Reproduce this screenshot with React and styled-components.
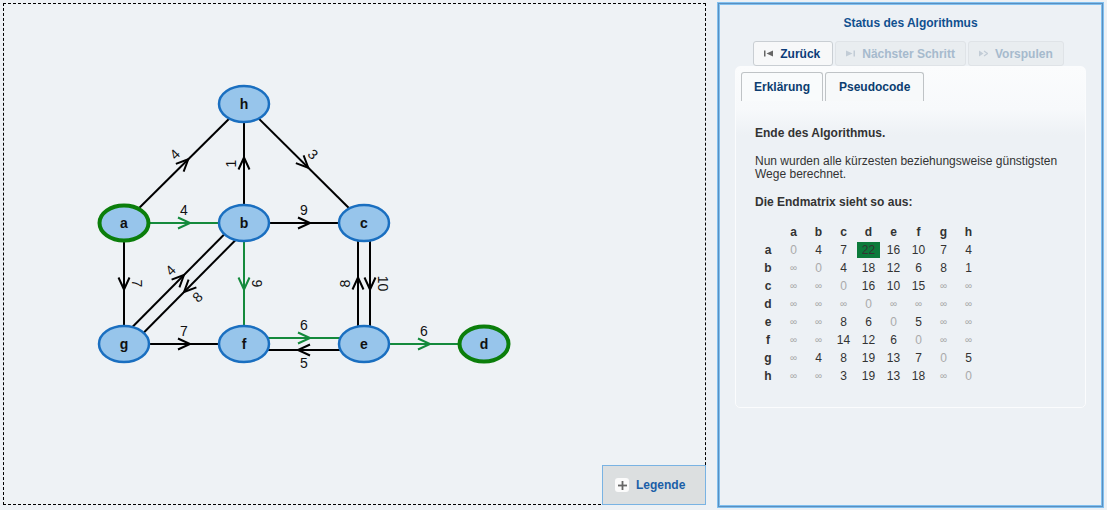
import styled, { createGlobalStyle } from "styled-components";

const GlobalStyle = createGlobalStyle`
  html, body {
    margin: 0;
    padding: 0;
    background: #edf1f5;
    font-family: "Liberation Sans", Arial, sans-serif;
  }
`;

const Page = styled.div`
  display: flex;
  align-items: flex-start;
  gap: 12px;
  padding: 3px;
`;

const Canvas = styled.div`
  position: relative;
  flex-shrink: 0;
  width: 701px;
  height: 500px;
  border: 1px dashed #000;
  background: #eef2f5;
`;

const GraphSvg = styled.svg`
  display: block;
  width: 701px;
  height: 500px;
`;

const LegendButton = styled.button`
  position: absolute;
  right: -1px;
  bottom: -1px;
  width: 104px;
  height: 40px;
  display: flex;
  align-items: center;
  gap: 7px;
  padding: 0 0 0 12px;
  background: #dcdfe0;
  border: 1px solid #79b3e3;
  font: bold 12px "Liberation Sans", Arial, sans-serif;
  color: #1a5ea7;
  cursor: pointer;
`;

const PlusBox = styled.span`
  width: 14px;
  height: 14px;
  border-radius: 3px;
  background: #fbfbfb;
  display: flex;
  align-items: center;
  justify-content: center;
`;

const Panel = styled.div`
  flex-shrink: 0;
  width: 351px;
  height: 502px;
  border: 1px solid #5b8fbf;
  box-shadow: 0 0 0 1px #80c0f0, inset 0 0 0 1px #80c0f0;
  background: #edf1f5;
  padding: 0 16px;
  display: flex;
  flex-direction: column;
  align-items: stretch;
`;

const Title = styled.h2`
  margin: 0;
  padding-top: 12px;
  height: 25px;
  text-align: center;
  font-size: 12px;
  line-height: 14px;
  font-weight: bold;
  color: #10508f;
`;

const Controls = styled.div`
  display: flex;
  justify-content: center;
  gap: 2px;
  margin-left: -4px;
`;

const StepButton = styled.button`
  height: 25px;
  display: flex;
  align-items: center;
  gap: 7px;
  padding: 0 ${(p) => p.$pad}px 0 10px;
  border: 1px solid ${(p) => (p.disabled ? "#dfe3e7" : "#c9ced3")};
  border-radius: 3px;
  background: ${(p) => (p.disabled ? "#e9edf0" : "#f7f8f9")};
  color: ${(p) => (p.disabled ? "#a6bacd" : "#0b3b78")};
  font: bold 12px "Liberation Sans", Arial, sans-serif;
  cursor: ${(p) => (p.disabled ? "default" : "pointer")};
`;

const Content = styled.div`
  border: 1px solid #fbfcfd;
  border-radius: 5px;
  background: linear-gradient(#fbfcfd 0, #f7f9fb 42px, #edf1f5 68px);
  padding: 5px 5px 0 5px;
`;

const Tabs = styled.div`
  display: flex;
  gap: 2px;
`;

const Tab = styled.div`
  height: 28px;
  padding: 0 ${(p) => p.$pad}px;
  display: flex;
  align-items: center;
  border: 1px solid #bfc3c6;
  border-bottom: none;
  border-radius: 3px 3px 0 0;
  background: ${(p) => (p.$active ? "#f9fbfc" : "#f7f9fa")};
  color: #0c3d70;
  font-size: 12px;
  font-weight: bold;
`;

const Body = styled.div`
  padding: 25px 15px 21px 14px;
  color: #333;
  font-size: 12px;
  line-height: 14px;
`;

const Strong = styled.p`
  margin: 0 0 14px 0;
  font-weight: bold;
`;

const Text = styled.p`
  margin: 0 0 14px 0;
  padding-top: 1px;
  line-height: 13px;
`;

const Matrix = styled.table`
  border-collapse: separate;
  border-spacing: 2px;
  margin: -1px 0 0 -1px;
  font-size: 12px;
`;

const Cell = styled.td`
  width: ${(p) => (p.$head ? 24 : 23)}px;
  height: 16px;
  padding: 0;
  text-align: center;
  line-height: 16px;
  color: ${(p) => (p.$dim ? "#aaa" : "#333")};
  font-size: ${(p) => (p.$inf ? "10px" : "12px")};
  font-weight: ${(p) => (p.$head ? "bold" : "normal")};
  background: ${(p) => (p.$mark ? "#0b7a3b" : "transparent")};
`;

const HeadCell = styled.th`
  width: 23px;
  height: 16px;
  padding: 0;
  text-align: center;
  font-weight: bold;
  color: #333;
`;

const NODES = {
  h: [244, 104],
  a: [124, 223],
  b: [244, 223],
  c: [364, 223],
  g: [124, 344],
  f: [244, 344],
  e: [364, 344],
  d: [484, 344],
};

const EDGES = [
  ["a", "h", 4],
  ["a", "b", 4, true],
  ["a", "g", 7],
  ["h", "c", 3],
  ["b", "h", 1],
  ["b", "c", 9],
  ["b", "f", 9, true],
  ["b", "g", 8, false, 6],
  ["g", "b", 4, false, 6],
  ["g", "f", 7],
  ["f", "e", 6, true, 6],
  ["e", "f", 5, false, 6],
  ["c", "e", 10, false, 6],
  ["e", "c", 8, false, 6],
  ["e", "d", 6, true],
];

const GREEN = "#148a3c";

const Edge = ({ from, to, weight, green, offset = 0 }) => {
  const [x1, y1] = NODES[from];
  const [x2, y2] = NODES[to];
  const len = Math.hypot(x2 - x1, y2 - y1);
  const ux = (x2 - x1) / len;
  const uy = (y2 - y1) / len;
  const nx = uy;
  const ny = -ux;
  const ox = nx * offset;
  const oy = ny * offset;
  const mx = (x1 + x2) / 2 + ox;
  const my = (y1 + y2) / 2 + oy;
  const tx = mx + ux * 6;
  const ty = my + uy * 6;
  const bx = tx - ux * 12;
  const by = ty - uy * 12;
  const color = green ? GREEN : "#000";
  let angle = (Math.atan2(uy, ux) * 180) / Math.PI;
  if (angle > 90.5) angle -= 180;
  if (angle < -90.5) angle += 180;
  const lx = mx + nx * 13;
  const ly = my + ny * 13;
  return (
    <g>
      <line x1={x1 + ox} y1={y1 + oy} x2={x2 + ox} y2={y2 + oy} stroke={color} strokeWidth="2" />
      <polyline
        points={`${bx + nx * 5.5},${by + ny * 5.5} ${tx},${ty} ${bx - nx * 5.5},${by - ny * 5.5}`}
        fill="none"
        stroke={color}
        strokeWidth="2"
      />
      <text
        x={lx}
        y={ly}
        transform={`rotate(${angle} ${lx} ${ly})`}
        textAnchor="middle"
        dominantBaseline="central"
        fontSize="14"
        fill="#111"
        fontFamily="Liberation Sans, Arial, sans-serif"
      >
        {weight}
      </text>
    </g>
  );
};

const Node = ({ id, start }) => {
  const [x, y] = NODES[id];
  return (
    <g>
      <ellipse
        cx={x}
        cy={y}
        rx={start ? 24.5 : 25}
        ry={start ? 17.5 : 18}
        fill="#97c5eb"
        stroke={start ? "#0b7e0b" : "#1a6fc0"}
        strokeWidth={start ? 4 : 2.5}
      />
      <text
        x={x}
        y={y}
        textAnchor="middle"
        dominantBaseline="central"
        fontSize="14"
        fontWeight="bold"
        fill="#111"
        fontFamily="Liberation Sans, Arial, sans-serif"
      >
        {id}
      </text>
    </g>
  );
};

const Graph = () => (
  <GraphSvg viewBox="4 4 701 500">
    {EDGES.map(([f, t, w, green, off]) => (
      <Edge key={f + t} from={f} to={t} weight={w} green={green} offset={off} />
    ))}
    {Object.keys(NODES).map((id) => (
      <Node key={id} id={id} start={id === "a" || id === "d"} />
    ))}
  </GraphSvg>
);

const StepIcon = ({ kind, color }) => (
  <svg width="9" height="7" viewBox="0 0 9 7">
    {kind === "back" && (
      <>
        <rect x="0" y="0.5" width="1.5" height="6" fill={color} />
        <polygon points="9,0.5 9,6.5 2.5,3.5" fill={color} />
      </>
    )}
    {kind === "next" && (
      <>
        <polygon points="0,0.5 0,6.5 6.5,3.5" fill={color} />
        <rect x="7.5" y="0.5" width="1.5" height="6" fill={color} />
      </>
    )}
    {kind === "fast" && (
      <>
        <polygon points="0,0.5 0,6.5 4.5,3.5" fill={color} />
        <polyline points="5,1 8.5,3.5 5,6" fill="none" stroke={color} strokeWidth="1.2" />
      </>
    )}
  </svg>
);

const COLS = ["a", "b", "c", "d", "e", "f", "g", "h"];
const MATRIX = [
  ["0", "4", "7", "22", "16", "10", "7", "4"],
  ["∞", "0", "4", "18", "12", "6", "8", "1"],
  ["∞", "∞", "0", "16", "10", "15", "∞", "∞"],
  ["∞", "∞", "∞", "0", "∞", "∞", "∞", "∞"],
  ["∞", "∞", "8", "6", "0", "5", "∞", "∞"],
  ["∞", "∞", "14", "12", "6", "0", "∞", "∞"],
  ["∞", "4", "8", "19", "13", "7", "0", "5"],
  ["∞", "∞", "3", "19", "13", "18", "∞", "0"],
];

const EndMatrix = () => (
  <Matrix>
    <thead>
      <tr>
        <HeadCell />
        {COLS.map((c) => (
          <HeadCell key={c}>{c}</HeadCell>
        ))}
      </tr>
    </thead>
    <tbody>
      {MATRIX.map((row, i) => (
        <tr key={COLS[i]}>
          <Cell $head>{COLS[i]}</Cell>
          {row.map((v, j) => (
            <Cell
              key={j}
              $dim={i === j || v === "∞"}
              $inf={v === "∞"}
              $mark={i === 0 && j === 3}
            >
              {v}
            </Cell>
          ))}
        </tr>
      ))}
    </tbody>
  </Matrix>
);

export default function App() {
  return (
    <>
      <GlobalStyle />
      <Page>
        <Canvas>
          <Graph />
          <LegendButton>
            <PlusBox>
              <svg width="9" height="9" viewBox="0 0 9 9">
                <rect x="3.6" y="0" width="1.8" height="9" fill="#666" />
                <rect x="0" y="3.6" width="9" height="1.8" fill="#666" />
              </svg>
            </PlusBox>
            Legende
          </LegendButton>
        </Canvas>
        <Panel>
          <Title>Status des Algorithmus</Title>
          <Controls>
            <StepButton $pad={12}>
              <StepIcon kind="back" color="#666" />
              Zurück
            </StepButton>
            <StepButton disabled $pad={10}>
              <StepIcon kind="next" color="#c2ccd6" />
              Nächster Schritt
            </StepButton>
            <StepButton disabled $pad={10}>
              <StepIcon kind="fast" color="#c2ccd6" />
              Vorspulen
            </StepButton>
          </Controls>
          <Content>
            <Tabs>
              <Tab $active $pad={12}>Erklärung</Tab>
              <Tab $pad={13}>Pseudocode</Tab>
            </Tabs>
            <Body>
              <Strong>Ende des Algorithmus.</Strong>
              <Text>
                Nun wurden alle kürzesten beziehungsweise günstigsten Wege
                berechnet.
              </Text>
              <Strong>Die Endmatrix sieht so aus:</Strong>
              <EndMatrix />
            </Body>
          </Content>
        </Panel>
      </Page>
    </>
  );
}
